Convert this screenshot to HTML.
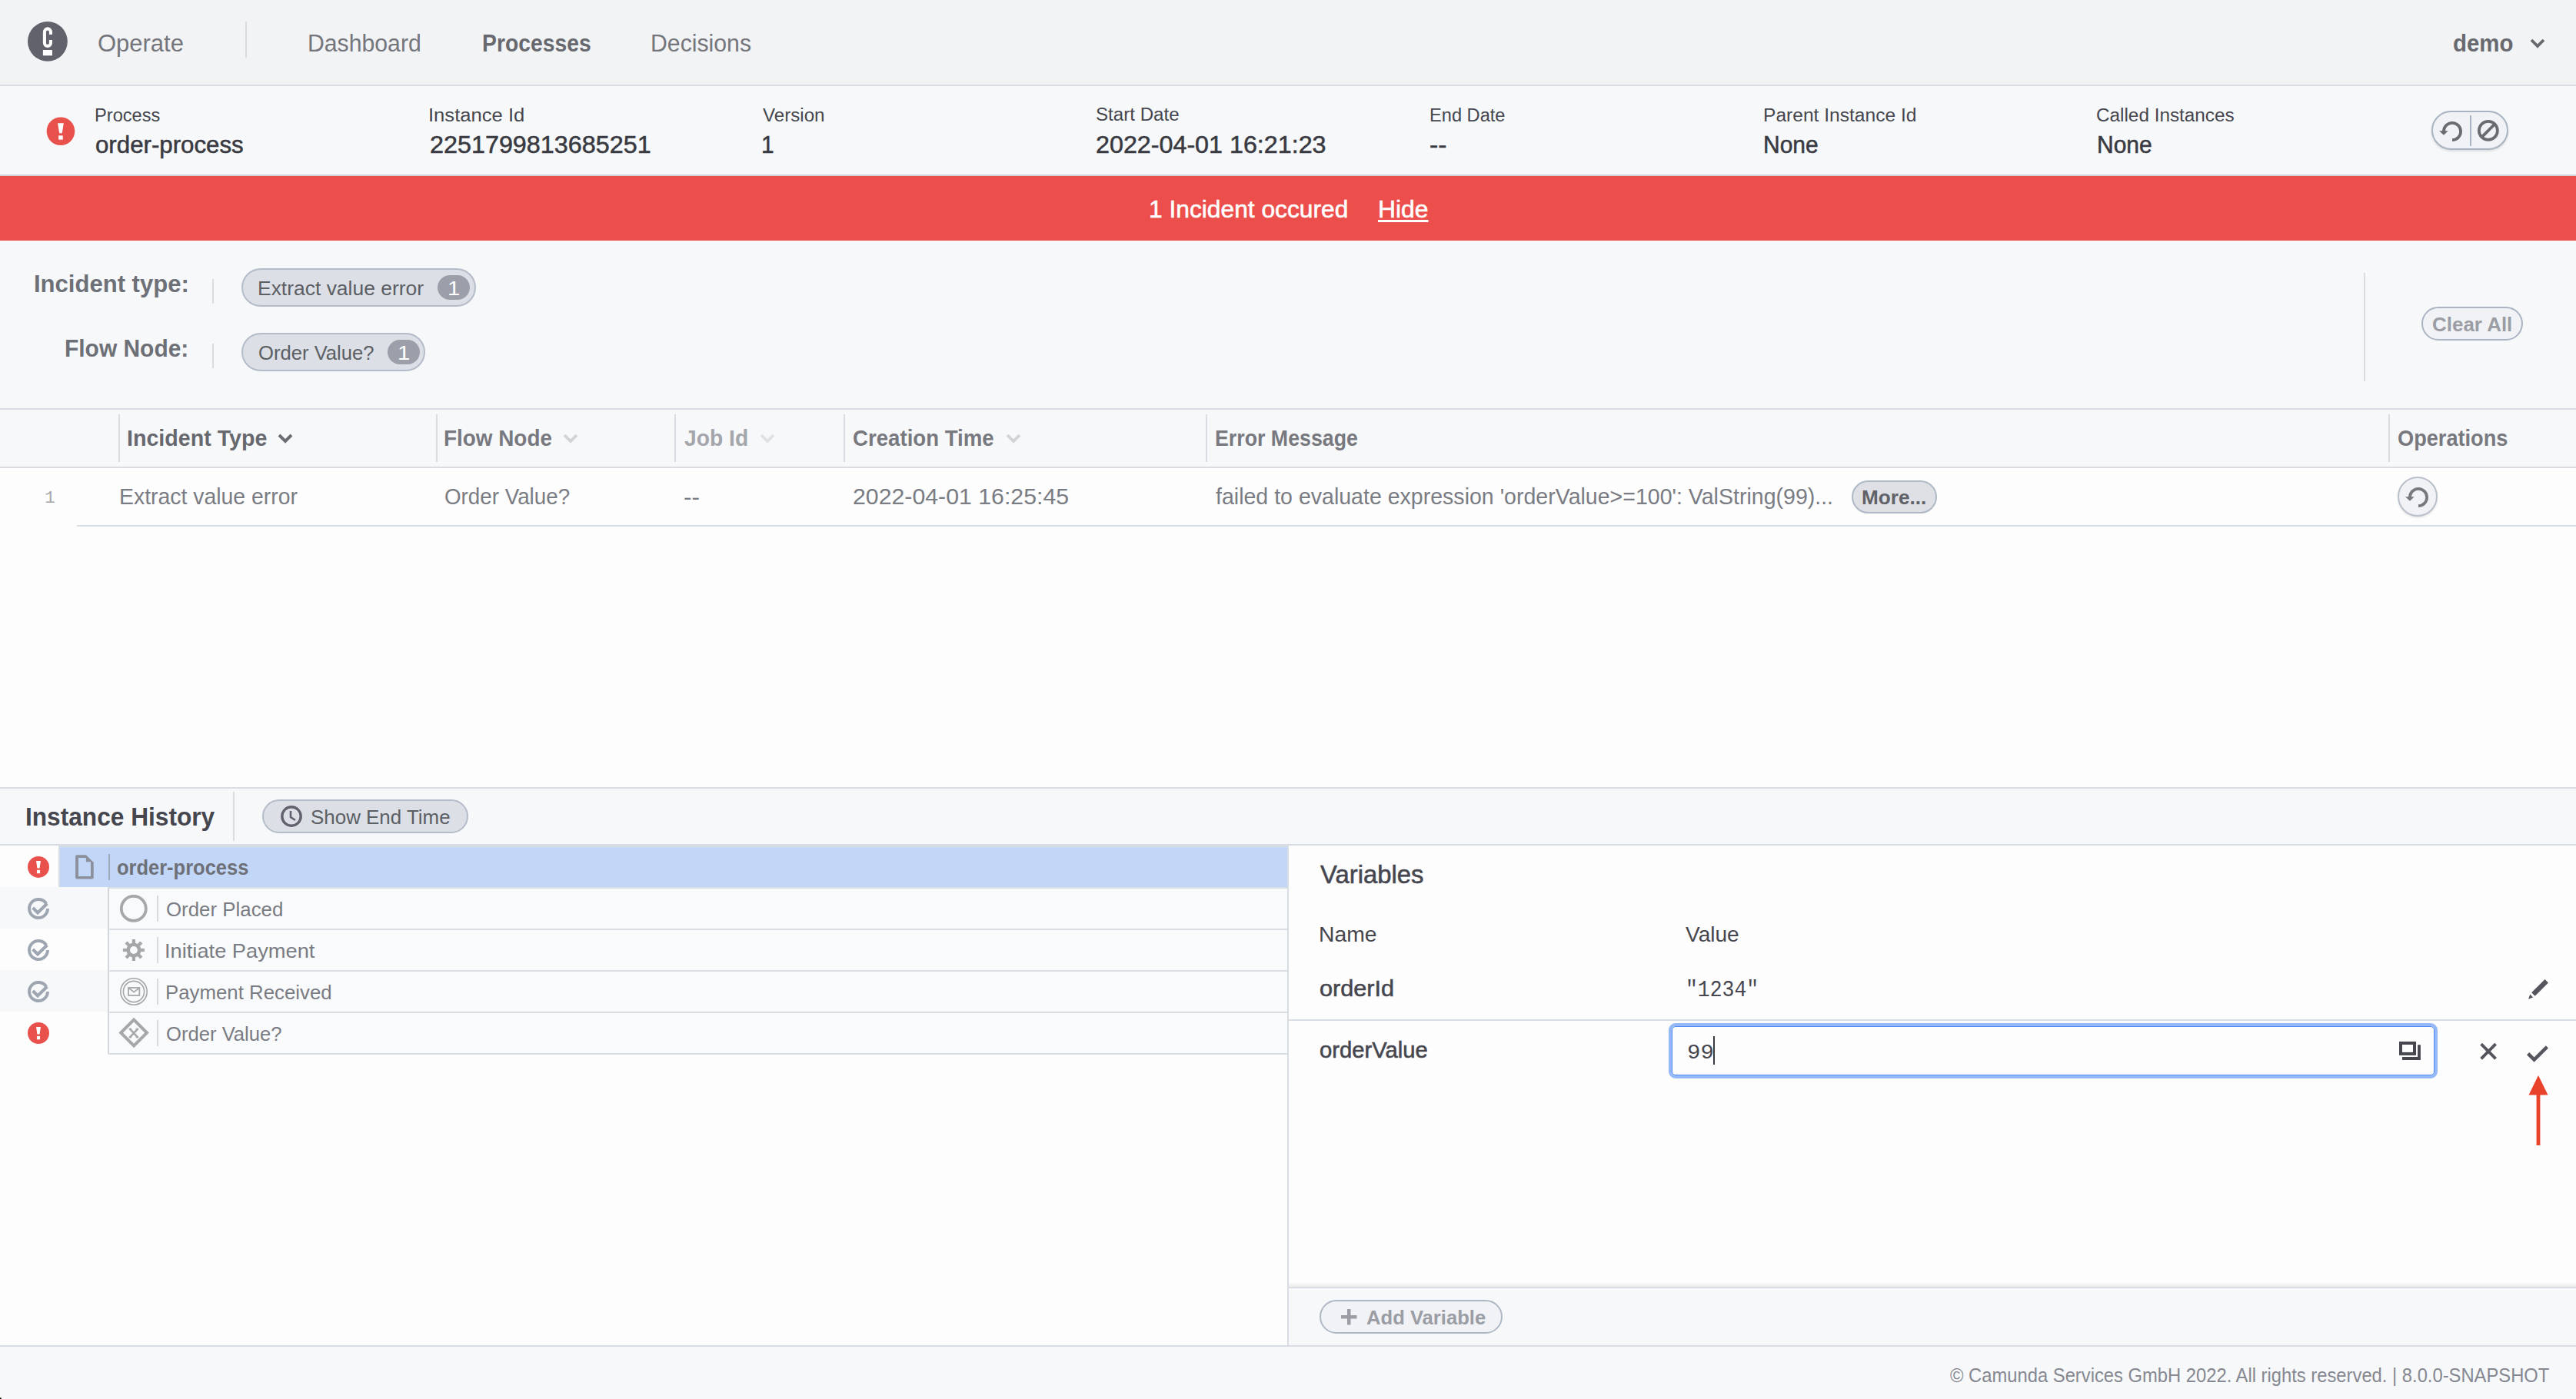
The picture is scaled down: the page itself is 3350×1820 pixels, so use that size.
<!DOCTYPE html>
<html><head><meta charset="utf-8"><style>
html,body{margin:0;padding:0;}
body{width:3350px;height:1820px;position:relative;overflow:hidden;background:#fdfdfe;font-family:"Liberation Sans",sans-serif;}
.t{position:absolute;white-space:pre;transform-origin:0 0;}
.r{position:absolute;box-sizing:border-box;}
svg{position:absolute;overflow:visible;}
@media (max-width: 2200px){ html{ zoom:0.5; } }

</style></head><body>
<!-- header -->
<div class="r" style="left:0;top:0;width:3350px;height:110px;background:#f2f3f5;"></div>
<div class="r" style="left:0;top:110px;width:3350px;height:2px;background:#d8dce3;"></div>
<svg style="left:36px;top:28px;" width="52" height="52" viewBox="0 0 52 52">
  <circle cx="25.9" cy="25.9" r="25.9" fill="#62626c"/>
  <rect x="21.9" y="9.4" width="8.05" height="22.5" rx="4.02" fill="none" stroke="#fff" stroke-width="4.1"/>
  <rect x="27.5" y="16.9" width="6" height="7.1" fill="#62626c"/>
  <rect x="19.85" y="37" width="12.1" height="7.3" fill="#fff"/>
</svg>
<div class="r" style="left:319px;top:28px;width:2px;height:47px;background:#d8dce3;"></div>
<svg style="left:3290px;top:50px;" width="20" height="13" viewBox="0 0 20 13">
  <path d="M2 2 L10 10 L18 2" fill="none" stroke="#68696f" stroke-width="3.8"/>
</svg>

<!-- details -->
<div class="r" style="left:0;top:112px;width:3350px;height:115px;background:#f7f8fa;"></div>
<div class="r" style="left:0;top:227px;width:3350px;height:2px;background:#cfd3da;"></div>
<svg style="left:0;top:0;" width="3350" height="1820" viewBox="0 0 3350 1820">
  <circle cx="78.95" cy="170.75" r="18.3" fill="#e9514c"/>
  <path d="M75.10 160.25 L82.80 160.25 L80.75 173.35 L77.15 173.35 Z" fill="#fff"/>
  <rect x="76.15" y="176.35" width="5.6" height="5.3" fill="#fff"/>
</svg>
<div class="r" style="left:3162px;top:144px;width:99.5px;height:51px;border:2px solid #a9b4c2;border-radius:26px;background:#f1f2f5;box-shadow:0 2px 3px rgba(0,0,0,0.10);"></div>
<div class="r" style="left:3212px;top:150px;width:1.75px;height:40px;background:#a9b4c2;"></div>
<svg style="left:3171px;top:156px;" width="36" height="30" viewBox="0 0 36 30">
  <path d="M6.9 15 A11.1 11.1 0 1 1 18 26.1" fill="none" stroke="#6a6b71" stroke-width="3.75"/>
  <path d="M1 14.25 L12.75 14.25 L7 19.75 Z" fill="#6a6b71"/>
</svg>
<svg style="left:3220px;top:154px;" width="32" height="32" viewBox="0 0 32 32">
  <circle cx="15.9" cy="15.9" r="12" fill="none" stroke="#6a6b71" stroke-width="3.75"/>
  <path d="M24.6 7.2 L7.2 24.6" stroke="#6a6b71" stroke-width="3.75"/>
</svg>

<!-- red bar -->
<div class="r" style="left:0;top:229px;width:3350px;height:84px;background:#ec4f4b;"></div>

<!-- filters -->
<div class="r" style="left:0;top:313px;width:3350px;height:294px;background:#f7f8fa;"></div>
<div class="r" style="left:276px;top:363px;width:2px;height:32px;background:#d8dce3;"></div>
<div class="r" style="left:276px;top:447px;width:2px;height:32px;background:#d8dce3;"></div>
<div class="r" style="left:314.3px;top:349.3px;width:304.7px;height:49.4px;border:2px solid #b3bcc8;border-radius:25px;background:#dcdfe6;"></div>
<div class="r" style="left:569px;top:358px;width:42px;height:32px;border-radius:16px;background:#9c9fa9;"></div>
<div class="r" style="left:314.3px;top:433.2px;width:239.2px;height:49.4px;border:2px solid #b3bcc8;border-radius:25px;background:#dcdfe6;"></div>
<div class="r" style="left:504px;top:442px;width:42px;height:32px;border-radius:16px;background:#9c9fa9;"></div>
<div class="r" style="left:3074px;top:355px;width:2px;height:141px;background:#d8dce3;"></div>
<div class="r" style="left:3149.3px;top:399px;width:131.5px;height:43.6px;border:2px solid #aab4c2;border-radius:22px;background:#f1f2f5;"></div>

<!-- table -->
<div class="r" style="left:0;top:531px;width:3350px;height:2px;background:#d8dce3;"></div>
<div class="r" style="left:0;top:607px;width:3350px;height:2px;background:#d8dce3;"></div>
<div class="r" style="left:154px;top:539px;width:2px;height:62px;background:#d8dce3;"></div>
<div class="r" style="left:567px;top:539px;width:2px;height:62px;background:#d8dce3;"></div>
<div class="r" style="left:877px;top:539px;width:2px;height:62px;background:#d8dce3;"></div>
<div class="r" style="left:1097px;top:539px;width:2px;height:62px;background:#d8dce3;"></div>
<div class="r" style="left:1568px;top:539px;width:2px;height:62px;background:#d8dce3;"></div>
<div class="r" style="left:3106px;top:539px;width:2px;height:62px;background:#d8dce3;"></div>
<svg style="left:361px;top:563px;" width="20" height="14" viewBox="0 0 20 14"><path d="M2 3 L10 11 L18 3" fill="none" stroke="#6b6d74" stroke-width="3.9"/></svg>
<svg style="left:732px;top:563px;" width="20" height="14" viewBox="0 0 20 14"><path d="M2 3 L10 11 L18 3" fill="none" stroke="#d2d3d7" stroke-width="3.8"/></svg>
<svg style="left:988px;top:563px;" width="20" height="14" viewBox="0 0 20 14"><path d="M2 3 L10 11 L18 3" fill="none" stroke="#e0e1e4" stroke-width="3.8"/></svg>
<svg style="left:1308px;top:563px;" width="20" height="14" viewBox="0 0 20 14"><path d="M2 3 L10 11 L18 3" fill="none" stroke="#d2d3d7" stroke-width="3.8"/></svg>
<div class="r" style="left:100px;top:683px;width:3250px;height:2px;background:#d8dce3;"></div>
<div class="r" style="left:2408px;top:624.5px;width:111px;height:43.5px;border:2px solid #afb8c5;border-radius:22px;background:#dfe0e6;"></div>
<div class="r" style="left:3118px;top:620px;width:52px;height:52px;border:2px solid #b9c0cb;border-radius:50%;background:#f1f2f5;box-shadow:0 2px 2px rgba(0,0,0,0.08);"></div>
<svg style="left:3127.25px;top:632px;" width="36" height="30" viewBox="0 0 36 30">
  <path d="M6.9 15 A11.1 11.1 0 1 1 18 26.1" fill="none" stroke="#77787e" stroke-width="3.75"/>
  <path d="M1 14.25 L12.75 14.25 L7 19.75 Z" fill="#77787e"/>
</svg>

<!-- instance history header -->
<div class="r" style="left:0;top:1024px;width:3350px;height:2px;background:#d8dce3;"></div>
<div class="r" style="left:0;top:1026px;width:3350px;height:72px;background:#f7f8fa;"></div>
<div class="r" style="left:0;top:1098px;width:3350px;height:2px;background:#d8dce3;"></div>
<div class="r" style="left:303px;top:1030px;width:2px;height:64px;background:#d8dce3;"></div>
<div class="r" style="left:341px;top:1040px;width:268px;height:44px;border:2px solid #b3bcc8;border-radius:22px;background:#dcdfe6;"></div>
<svg style="left:365px;top:1048px;" width="28" height="28" viewBox="0 0 28 28">
  <circle cx="14" cy="14" r="12.2" fill="none" stroke="#62626e" stroke-width="3.4"/>
  <path d="M13 7 L13 15 L19 19" fill="none" stroke="#62626e" stroke-width="2.6"/>
</svg>

<!-- tree -->
<div class="r" style="left:76px;top:1100px;width:1598px;height:2px;background:#d8dce3;"></div>
<div class="r" style="left:78px;top:1102px;width:1596px;height:52px;background:#c2d6f7;"></div>
<div class="r" style="left:141px;top:1154px;width:1533px;height:218px;background:#f9fafc;"></div>
<div class="r" style="left:0;top:1154px;width:140px;height:54px;background:#f7f8fa;"></div>
<div class="r" style="left:0;top:1262px;width:140px;height:54px;background:#f7f8fa;"></div>
<div class="r" style="left:140px;top:1154px;width:2px;height:218px;background:#d3d6dd;"></div>
<div class="r" style="left:141px;top:1208px;width:1533px;height:2px;background:#d8dce3;"></div>
<div class="r" style="left:141px;top:1262px;width:1533px;height:2px;background:#d8dce3;"></div>
<div class="r" style="left:141px;top:1316px;width:1533px;height:2px;background:#d8dce3;"></div>
<div class="r" style="left:140px;top:1370px;width:1534px;height:2px;background:#d8dce3;"></div>
<div class="r" style="left:1674px;top:1100px;width:2px;height:650px;background:#d8dce3;"></div>
<!-- tree icons -->
<div class="r" style="left:76px;top:1100px;width:2px;height:54px;background:#d8dce3;"></div>
<div class="r" style="left:141px;top:1154px;width:1533px;height:2px;background:#d8dce3;"></div>
<div class="r" style="left:204px;top:1165px;width:2px;height:34px;background:#d8dbe2;"></div>
<div class="r" style="left:204px;top:1219px;width:2px;height:34px;background:#d8dbe2;"></div>
<div class="r" style="left:204px;top:1273px;width:2px;height:34px;background:#d8dbe2;"></div>
<div class="r" style="left:204px;top:1327px;width:2px;height:34px;background:#d8dbe2;"></div>
<div class="r" style="left:141px;top:1111px;width:2px;height:34px;background:#9fa9bb;"></div>
<svg style="left:0;top:0;" width="3350" height="1820" viewBox="0 0 3350 1820">
  <circle cx="50" cy="1127.9" r="14" fill="#e9514c"/>
  <path d="M47.05 1120.0 L52.95 1120.0 L51.55 1129.5 L48.45 1129.5 Z" fill="#fff"/>
  <rect x="47.95" y="1131.8000000000002" width="4.1" height="4.4" fill="#fff"/>
  <circle cx="50" cy="1344" r="14" fill="#e9514c"/>
  <path d="M47.05 1336.1 L52.95 1336.1 L51.55 1345.6 L48.45 1345.6 Z" fill="#fff"/>
  <rect x="47.95" y="1347.9" width="4.1" height="4.4" fill="#fff"/>
  <path d="M62 1182 A12 12 0 1 1 60.18 1175.64" fill="none" stroke="#9ea6b2" stroke-width="4"/>
  <path d="M42.7 1181.1 L49 1187.4 L61.3 1175.4" fill="none" stroke="#9ea6b2" stroke-width="4.2"/>
  <path d="M62 1236 A12 12 0 1 1 60.18 1229.64" fill="none" stroke="#9ea6b2" stroke-width="4"/>
  <path d="M42.7 1235.1 L49 1241.4 L61.3 1229.4" fill="none" stroke="#9ea6b2" stroke-width="4.2"/>
  <path d="M62 1290 A12 12 0 1 1 60.18 1283.64" fill="none" stroke="#9ea6b2" stroke-width="4"/>
  <path d="M42.7 1289.1 L49 1295.4 L61.3 1283.4" fill="none" stroke="#9ea6b2" stroke-width="4.2"/>
  <path fill-rule="evenodd" fill="#8b909c" d="M98.1 1114.2 Q98.1 1112.2 100.1 1112.2 L111.9 1112.2 L121.7 1122 L121.7 1141.6 Q121.7 1143.6 119.7 1143.6 L100.1 1143.6 Q98.1 1143.6 98.1 1141.6 Z M102 1115.9 L111.9 1115.9 L111.9 1121.2 L118 1121.2 L118 1139.9 L102 1139.9 Z"/>
  <circle cx="173.8" cy="1181.9" r="16" fill="none" stroke="#a6a7ab" stroke-width="3.8"/>
  <g fill="#a6a7ab" transform="translate(173.9 1236)">
    <circle r="9.6"/>
    <rect x="-2.1" y="-14" width="4.2" height="28"/>
    <rect x="-14" y="-2.1" width="28" height="4.2"/>
    <rect x="-2.1" y="-14" width="4.2" height="28" transform="rotate(45)"/>
    <rect x="-2.1" y="-14" width="4.2" height="28" transform="rotate(-45)"/>
  </g>
  <circle cx="173.9" cy="1236" r="4.9" fill="#f9fafc"/>
  <circle cx="174" cy="1290" r="17.2" fill="none" stroke="#a6a7ab" stroke-width="1.6"/>
  <circle cx="174" cy="1290" r="13.6" fill="none" stroke="#a6a7ab" stroke-width="1.6"/>
  <rect x="167.05" y="1284.95" width="14.3" height="10" fill="none" stroke="#a6a7ab" stroke-width="1.8"/>
  <path d="M167.05 1284.95 L174.2 1290.6 L181.35 1284.95" fill="none" stroke="#a6a7ab" stroke-width="1.8"/>
  <path d="M174.1 1326.7 L191 1343.6 L174.1 1360.5 L157.2 1343.6 Z" fill="none" stroke="#a6a7ab" stroke-width="4"/>
  <path d="M168.7 1338.4 L179.3 1349.6 M179.3 1338.4 L168.7 1349.6" stroke="#a6a7ab" stroke-width="2.6"/>
  <path d="M167.6 1338.4 L171.2 1338.4 M176.6 1338.4 L180.2 1338.4 M167.6 1349.6 L171.2 1349.6 M176.6 1349.6 L180.2 1349.6" stroke="#a6a7ab" stroke-width="1.4"/>
</svg>

<!-- variables -->
<div class="r" style="left:1676px;top:1326px;width:1674px;height:2px;background:#d8dce3;"></div>
<div class="r" style="left:2169.5px;top:1331px;width:1000.5px;height:72px;border:4.4px solid #94b8f8;border-radius:9px;background:#fdfdfe;"></div>
<div class="r" style="left:2173.9px;top:1335.4px;width:991.7px;height:63.2px;border:1.5px solid #5089f5;border-radius:5px;"></div>
<div class="r" style="left:2228px;top:1348px;width:2px;height:37px;background:#393a41;"></div>
<svg style="left:0;top:0;" width="3350" height="1820" viewBox="0 0 3350 1820">
  <rect x="3122" y="1357" width="18" height="13.9" fill="none" stroke="#45464e" stroke-width="4"/>
  <path d="M3124 1377 L3146 1377 L3146 1359.2" fill="none" stroke="#45464e" stroke-width="3.8"/>
  <path d="M3226.6 1358.2 L3245.6 1377.3 M3245.6 1358.2 L3226.6 1377.3" stroke="#55565d" stroke-width="3.9"/>
  <path d="M3287.6 1370.6 L3295.6 1378.6 L3312.4 1361.8" fill="none" stroke="#55565d" stroke-width="4.5"/>
  <path d="M3309.5 1274 L3314 1278.5 L3296.7 1295.8 L3292.2 1291.3 Z" fill="#55565d"/>
  <path d="M3288 1299.8 L3290.3 1293.6 L3294.2 1297.5 Z" fill="#55565d"/>
</svg>



<svg style="left:3288px;top:1399px;" width="26" height="92" viewBox="0 0 26 92">
  <path d="M13 0 L25.5 25.5 L0.5 25.5 Z" fill="#e8432a"/>
  <rect x="10.6" y="24" width="4.8" height="67" fill="#e8432a"/>
</svg>
<div class="r" style="left:1676px;top:1668px;width:1674px;height:6px;background:linear-gradient(to bottom, rgba(0,0,0,0), rgba(0,0,0,0.07));"></div>
<div class="r" style="left:1676px;top:1674px;width:1674px;height:2px;background:#d8dce3;"></div>
<div class="r" style="left:1676px;top:1676px;width:1674px;height:74px;background:#f7f8fa;"></div>
<div class="r" style="left:1716px;top:1691px;width:238px;height:44px;border:2px solid #aeb8c5;border-radius:22px;background:#f1f2f5;"></div>
<svg style="left:1743.8px;top:1702.9px;" width="21" height="21" viewBox="0 0 21 21">
  <path d="M10.25 0 L10.25 20.5 M0 10.25 L20.5 10.25" stroke="#9b9da4" stroke-width="4.5"/>
</svg>

<!-- footer -->
<div class="r" style="left:0;top:1750px;width:3350px;height:2px;background:#d8dce3;"></div>
<div class="r" style="left:0;top:1752px;width:3350px;height:68px;background:#f7f8fa;"></div>
<div class="r" style="left:0;top:1817.6px;width:2.4px;height:2.4px;border-top-right-radius:100%;background:#1b2015;"></div>

<div class="t" style="left:127.45px;top:40.68px;font-size:31.88px;line-height:31.88px;font-family:'Liberation Sans', sans-serif;font-weight:normal;color:#74767c;transform:scaleX(0.9712);">Operate</div>
<div class="t" style="left:400.08px;top:41.05px;font-size:31.88px;line-height:31.88px;font-family:'Liberation Sans', sans-serif;font-weight:normal;color:#74767c;transform:scaleX(0.9475);">Dashboard</div>
<div class="t" style="left:626.77px;top:40.50px;font-size:31.88px;line-height:31.88px;font-family:'Liberation Sans', sans-serif;font-weight:bold;color:#68696f;transform:scaleX(0.8881);">Processes</div>
<div class="t" style="left:846.08px;top:40.55px;font-size:31.88px;line-height:31.88px;font-family:'Liberation Sans', sans-serif;font-weight:normal;color:#74767c;transform:scaleX(0.9480);">Decisions</div>
<div class="t" style="left:3189.82px;top:40.57px;font-size:30.43px;line-height:30.43px;font-family:'Liberation Sans', sans-serif;font-weight:bold;color:#68696f;transform:scaleX(0.9674);">demo</div>
<div class="t" style="left:123.11px;top:137.64px;font-size:24.64px;line-height:24.64px;font-family:'Liberation Sans', sans-serif;font-weight:normal;color:#45464e;transform:scaleX(0.9595);">Process</div>
<div class="t" style="left:123.74px;top:172.61px;font-size:31.52px;line-height:31.52px;font-family:'Liberation Sans', sans-serif;font-weight:normal;color:#393a41;transform:scaleX(0.9911);-webkit-text-stroke:0.55px currentColor;">order-process</div>
<div class="t" style="left:556.69px;top:137.90px;font-size:24.64px;line-height:24.64px;font-family:'Liberation Sans', sans-serif;font-weight:normal;color:#45464e;transform:scaleX(1.0404);">Instance Id</div>
<div class="t" style="left:558.88px;top:173.25px;font-size:31.52px;line-height:31.52px;font-family:'Liberation Sans', sans-serif;font-weight:normal;color:#393a41;transform:scaleX(1.0256);-webkit-text-stroke:0.55px currentColor;">2251799813685251</div>
<div class="t" style="left:991.76px;top:137.90px;font-size:24.64px;line-height:24.64px;font-family:'Liberation Sans', sans-serif;font-weight:normal;color:#45464e;transform:scaleX(0.9805);">Version</div>
<div class="t" style="left:990.48px;top:172.56px;font-size:31.52px;line-height:31.52px;font-family:'Liberation Sans', sans-serif;font-weight:normal;color:#393a41;transform:scaleX(0.9462);-webkit-text-stroke:0.55px currentColor;">1</div>
<div class="t" style="left:1424.79px;top:137.39px;font-size:24.64px;line-height:24.64px;font-family:'Liberation Sans', sans-serif;font-weight:normal;color:#45464e;transform:scaleX(0.9802);">Start Date</div>
<div class="t" style="left:1425.38px;top:173.25px;font-size:31.52px;line-height:31.52px;font-family:'Liberation Sans', sans-serif;font-weight:normal;color:#393a41;transform:scaleX(1.0235);-webkit-text-stroke:0.55px currentColor;">2022-04-01 16:21:23</div>
<div class="t" style="left:1859.10px;top:137.90px;font-size:24.64px;line-height:24.64px;font-family:'Liberation Sans', sans-serif;font-weight:normal;color:#45464e;transform:scaleX(0.9595);">End Date</div>
<div class="t" style="left:1859.09px;top:173.48px;font-size:31.52px;line-height:31.52px;font-family:'Liberation Sans', sans-serif;font-weight:normal;color:#393a41;transform:scaleX(1.0692);-webkit-text-stroke:0.55px currentColor;">--</div>
<div class="t" style="left:2293.03px;top:137.90px;font-size:24.64px;line-height:24.64px;font-family:'Liberation Sans', sans-serif;font-weight:normal;color:#45464e;transform:scaleX(0.9982);">Parent Instance Id</div>
<div class="t" style="left:2292.57px;top:172.56px;font-size:31.52px;line-height:31.52px;font-family:'Liberation Sans', sans-serif;font-weight:normal;color:#393a41;transform:scaleX(0.9513);-webkit-text-stroke:0.55px currentColor;">None</div>
<div class="t" style="left:2726.03px;top:137.90px;font-size:24.64px;line-height:24.64px;font-family:'Liberation Sans', sans-serif;font-weight:normal;color:#45464e;transform:scaleX(0.9869);">Called Instances</div>
<div class="t" style="left:2726.56px;top:172.56px;font-size:31.52px;line-height:31.52px;font-family:'Liberation Sans', sans-serif;font-weight:normal;color:#393a41;transform:scaleX(0.9513);-webkit-text-stroke:0.55px currentColor;">None</div>
<div class="t" style="left:1494.45px;top:256.91px;font-size:31.01px;line-height:31.01px;font-family:'Liberation Sans', sans-serif;font-weight:normal;color:#ffffff;transform:scaleX(1.0239);-webkit-text-stroke:0.55px currentColor;">1 Incident occured</div>
<div class="t" style="left:1791.90px;top:256.91px;font-size:31.01px;line-height:31.01px;font-family:'Liberation Sans', sans-serif;font-weight:normal;color:#ffffff;transform:scaleX(1.0279);-webkit-text-stroke:0.55px currentColor;text-decoration:underline;text-underline-offset:3px;">Hide</div>
<div class="t" style="left:43.58px;top:354.75px;font-size:30.80px;line-height:30.80px;font-family:'Liberation Sans', sans-serif;font-weight:bold;color:#6d7076;transform:scaleX(1.0077);">Incident type:</div>
<div class="t" style="left:84.15px;top:438.75px;font-size:30.80px;line-height:30.80px;font-family:'Liberation Sans', sans-serif;font-weight:bold;color:#6d7076;transform:scaleX(0.9720);">Flow Node:</div>
<div class="t" style="left:334.88px;top:361.56px;font-size:26.45px;line-height:26.45px;font-family:'Liberation Sans', sans-serif;font-weight:normal;color:#5b5e63;transform:scaleX(1.0002);">Extract value error</div>
<div class="t" style="left:335.72px;top:446.06px;font-size:26.45px;line-height:26.45px;font-family:'Liberation Sans', sans-serif;font-weight:normal;color:#5b5e63;transform:scaleX(0.9697);">Order Value?</div>
<div class="t" style="left:581.56px;top:361.74px;font-size:26.52px;line-height:26.52px;font-family:'Liberation Sans', sans-serif;font-weight:normal;color:#ffffff;transform:scaleX(1.0998);">1</div>
<div class="t" style="left:516.56px;top:445.74px;font-size:26.52px;line-height:26.52px;font-family:'Liberation Sans', sans-serif;font-weight:normal;color:#ffffff;transform:scaleX(1.0998);">1</div>
<div class="t" style="left:3163.46px;top:409.22px;font-size:26.67px;line-height:26.67px;font-family:'Liberation Sans', sans-serif;font-weight:bold;color:#9b9da4;transform:scaleX(0.9735);">Clear All</div>
<div class="t" style="left:165.00px;top:555.59px;font-size:28.99px;line-height:28.99px;font-family:'Liberation Sans', sans-serif;font-weight:bold;color:#66686e;transform:scaleX(0.9879);">Incident Type</div>
<div class="t" style="left:577.05px;top:555.59px;font-size:28.99px;line-height:28.99px;font-family:'Liberation Sans', sans-serif;font-weight:bold;color:#77797f;transform:scaleX(0.9618);">Flow Node</div>
<div class="t" style="left:889.69px;top:555.59px;font-size:28.99px;line-height:28.99px;font-family:'Liberation Sans', sans-serif;font-weight:bold;color:#a4a6ab;transform:scaleX(0.9741);">Job Id</div>
<div class="t" style="left:1109.39px;top:555.59px;font-size:28.99px;line-height:28.99px;font-family:'Liberation Sans', sans-serif;font-weight:bold;color:#77797f;transform:scaleX(0.9531);">Creation Time</div>
<div class="t" style="left:1579.62px;top:556.46px;font-size:28.99px;line-height:28.99px;font-family:'Liberation Sans', sans-serif;font-weight:bold;color:#77797f;transform:scaleX(0.9230);">Error Message</div>
<div class="t" style="left:3117.66px;top:555.59px;font-size:28.99px;line-height:28.99px;font-family:'Liberation Sans', sans-serif;font-weight:bold;color:#77797f;transform:scaleX(0.9371);">Operations</div>
<div class="t" style="left:58.40px;top:637.11px;font-size:22.83px;line-height:22.83px;font-family:'Liberation Mono', monospace;font-weight:normal;color:#a4a6ab;transform:scaleX(1.0040);">1</div>
<div class="t" style="left:155.23px;top:631.59px;font-size:28.99px;line-height:28.99px;font-family:'Liberation Sans', sans-serif;font-weight:normal;color:#7a7c83;transform:scaleX(0.9799);">Extract value error</div>
<div class="t" style="left:577.61px;top:631.59px;font-size:28.99px;line-height:28.99px;font-family:'Liberation Sans', sans-serif;font-weight:normal;color:#7a7c83;transform:scaleX(0.9579);">Order Value?</div>
<div class="t" style="left:888.92px;top:632.68px;font-size:28.99px;line-height:28.99px;font-family:'Liberation Sans', sans-serif;font-weight:normal;color:#7a7c83;transform:scaleX(1.0889);">--</div>
<div class="t" style="left:1108.99px;top:632.17px;font-size:28.99px;line-height:28.99px;font-family:'Liberation Sans', sans-serif;font-weight:normal;color:#7a7c83;transform:scaleX(1.0444);">2022-04-01 16:25:45</div>
<div class="t" style="left:1580.71px;top:631.59px;font-size:28.99px;line-height:28.99px;font-family:'Liberation Sans', sans-serif;font-weight:normal;color:#7a7c83;transform:scaleX(0.9846);">failed to evaluate expression &#x27;orderValue&gt;=100&#x27;: ValString(99)...</div>
<div class="t" style="left:2421.42px;top:633.91px;font-size:26.09px;line-height:26.09px;font-family:'Liberation Sans', sans-serif;font-weight:bold;color:#606268;transform:scaleX(1.0020);">More...</div>
<div class="t" style="left:32.78px;top:1045.14px;font-size:34.06px;line-height:34.06px;font-family:'Liberation Sans', sans-serif;font-weight:bold;color:#45464e;transform:scaleX(0.9295);">Instance History</div>
<div class="t" style="left:403.96px;top:1049.88px;font-size:26.09px;line-height:26.09px;font-family:'Liberation Sans', sans-serif;font-weight:normal;color:#5b5e63;transform:scaleX(0.9944);">Show End Time</div>
<div class="t" style="left:151.98px;top:1115.99px;font-size:26.81px;line-height:26.81px;font-family:'Liberation Sans', sans-serif;font-weight:bold;color:#6d7076;transform:scaleX(0.9507);">order-process</div>
<div class="t" style="left:215.71px;top:1169.56px;font-size:26.45px;line-height:26.45px;font-family:'Liberation Sans', sans-serif;font-weight:normal;color:#7a7c83;transform:scaleX(0.9779);">Order Placed</div>
<div class="t" style="left:213.56px;top:1223.56px;font-size:26.45px;line-height:26.45px;font-family:'Liberation Sans', sans-serif;font-weight:normal;color:#7a7c83;transform:scaleX(1.0308);">Initiate Payment</div>
<div class="t" style="left:214.93px;top:1277.56px;font-size:26.45px;line-height:26.45px;font-family:'Liberation Sans', sans-serif;font-weight:normal;color:#7a7c83;transform:scaleX(0.9761);">Payment Received</div>
<div class="t" style="left:215.72px;top:1331.56px;font-size:26.45px;line-height:26.45px;font-family:'Liberation Sans', sans-serif;font-weight:normal;color:#7a7c83;transform:scaleX(0.9697);">Order Value?</div>
<div class="t" style="left:1717.17px;top:1121.03px;font-size:33.33px;line-height:33.33px;font-family:'Liberation Sans', sans-serif;font-weight:normal;color:#45464e;transform:scaleX(0.9859);-webkit-text-stroke:0.55px currentColor;">Variables</div>
<div class="t" style="left:1715.23px;top:1200.57px;font-size:28.26px;line-height:28.26px;font-family:'Liberation Sans', sans-serif;font-weight:normal;color:#45464e;transform:scaleX(1.0030);">Name</div>
<div class="t" style="left:2192.22px;top:1200.72px;font-size:28.26px;line-height:28.26px;font-family:'Liberation Sans', sans-serif;font-weight:normal;color:#45464e;transform:scaleX(0.9939);">Value</div>
<div class="t" style="left:1715.76px;top:1271.84px;font-size:28.99px;line-height:28.99px;font-family:'Liberation Sans', sans-serif;font-weight:normal;color:#45464e;transform:scaleX(1.0572);-webkit-text-stroke:0.55px currentColor;">orderId</div>
<div class="t" style="left:2191.81px;top:1273.84px;font-size:28.99px;line-height:28.99px;font-family:'Liberation Mono', monospace;font-weight:normal;color:#45464e;transform:scaleX(0.9117);">&quot;1234&quot;</div>
<div class="t" style="left:1715.82px;top:1351.84px;font-size:28.99px;line-height:28.99px;font-family:'Liberation Sans', sans-serif;font-weight:normal;color:#45464e;transform:scaleX(1.0084);-webkit-text-stroke:0.55px currentColor;">orderValue</div>
<div class="t" style="left:2194.22px;top:1356.24px;font-size:27.54px;line-height:27.54px;font-family:'Liberation Mono', monospace;font-weight:normal;color:#45464e;transform:scaleX(1.0539);">99</div>
<div class="t" style="left:1777.23px;top:1701.45px;font-size:26.52px;line-height:26.52px;font-family:'Liberation Sans', sans-serif;font-weight:bold;color:#9b9da4;transform:scaleX(0.9662);">Add Variable</div>
<div class="t" style="left:2535.76px;top:1775.63px;font-size:26.09px;line-height:26.09px;font-family:'Liberation Sans', sans-serif;font-weight:normal;color:#868891;transform:scaleX(0.9115);">© Camunda Services GmbH 2022. All rights reserved. | 8.0.0-SNAPSHOT</div>
</body></html>
